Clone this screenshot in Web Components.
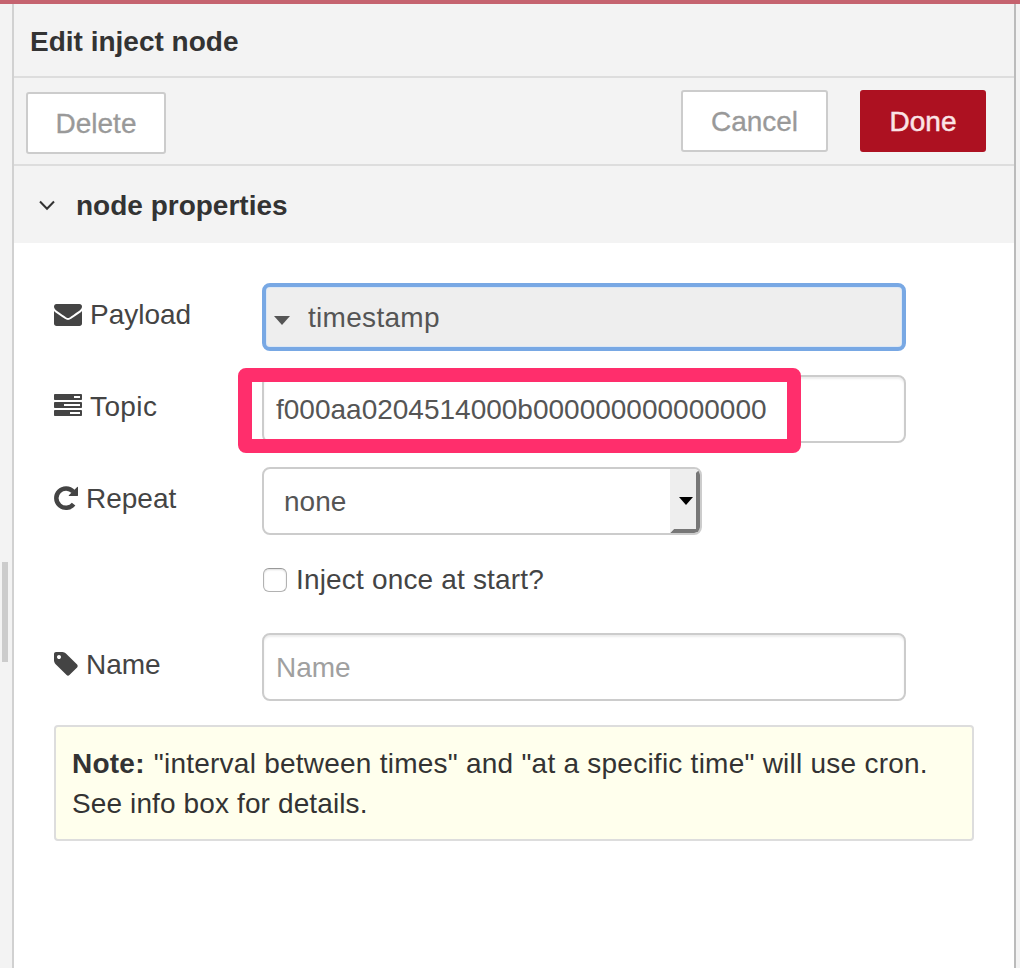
<!DOCTYPE html>
<html lang="en">
<head>
<meta charset="utf-8">
<title>Edit inject node</title>
<style>
html,body{margin:0;height:100%}
body{font:28px/40px "Liberation Sans",Arial,sans-serif;color:#333;overflow:hidden;background:#f3f3f3}
</style>
</head>
<body>
<node-editor>
  <editor-header>Edit inject node</editor-header>
  <editor-toolbar>
    <tool-button class="del">Delete</tool-button>
    <tool-button slot="end" class="cancel">Cancel</tool-button>
    <tool-button slot="end" class="done" primary>Done</tool-button>
  </editor-toolbar>
  <section-title>node properties</section-title>
  <node-form>
    <form-row icon="envelope" label="Payload"><text-field kind="typed">timestamp</text-field></form-row>
    <form-row icon="tasks" label="Topic" style="--label-spacing:.4px"><text-field marked>f000aa0204514000b000000000000000</text-field></form-row>
    <form-row icon="repeat" label="Repeat"><select-field>none</select-field></form-row>
    <check-field>Inject once at start?</check-field>
    <form-row icon="tag" label="Name"><text-field kind="placeholder">Name</text-field></form-row>
    <form-note><b slot="title">Note:</b><span slot="first">"interval between times" and "at a specific time" will use cron.</span><span>See info box for details.</span></form-note>
  </node-form>
</node-editor>
<script>
const define = (name, html, setup) => customElements.define(name, class extends HTMLElement {
  constructor() {
    super();
    this.attachShadow({ mode: 'open' }).innerHTML = '<style>*{box-sizing:border-box}:host{display:block;box-sizing:border-box}</style>' + html;
  }
  connectedCallback() { if (setup) setup(this, this.shadowRoot); }
});

// Each icon: viewBox, drawn width, markup
const icons = {
  envelope: ['0 0 1792 1792', 28, '<path d="M1792 710v794q0 66-47 113t-113 47h-1472q-66 0-113-47t-47-113v-794q44 49 101 87 362 246 497 345 57 42 92.5 65.5t94.5 48 110 24.5h2q51 0 110-24.5t94.5-48 92.5-65.5q170-123 498-345 57-39 100-87zm0-294q0 79-49 151t-122 123q-376 261-468 325-10 7-42.5 31t-54 38.5-52 32.5-57.5 27-50 9h-2q-23 0-50-9t-57.5-27-52-32.5-54-38.5-42.5-31q-91-64-262-182.5t-205-142.5q-62-42-117-115.5t-55-136.5q0-78 41.5-130t118.5-52h1472q65 0 112.5 47t47.5 113z"/>'],
  tasks: ['0 0 1792 1792', 28, '<path d="M1024 1408h640v-128h-640v128zm-384-512h1024v-128h-1024v128zm640-512h384v-128h-384v128zm512 832v256q0 26-19 45t-45 19h-1664q-26 0-45-19t-19-45v-256q0-26 19-45t45-19h1664q26 0 45 19t19 45zm0-512v256q0 26-19 45t-45 19h-1664q-26 0-45-19t-19-45v-256q0-26 19-45t45-19h1664q26 0 45 19t19 45zm0-512v256q0 26-19 45t-45 19h-1664q-26 0-45-19t-19-45v-256q0-26 19-45t45-19h1664q26 0 45 19t19 45z"/>'],
  repeat: ['0 0 24 28', 24, '<path d="M19.2 7.6A9.7 9.7 0 1 0 19.6 20.2" fill="none" stroke="#444" stroke-width="4.5"/><path d="M23.2 2.9q.8-.5.8.5v7.8q0 .9-.9.9h-7.7q-1.2 0-.5-.9z"/>'],
  tag: ['128 0 1536 1792', 24, '<path d="M576 448q0-53-37.5-90.5t-90.5-37.5-90.5 37.5-37.5 90.5 37.5 90.5 90.5 37.5 90.5-37.5 37.5-90.5zm1067 576q0 53-37 90l-491 492q-39 37-91 37-53 0-90-37l-715-716q-38-37-64.5-101t-26.5-117v-416q0-52 38-90t90-38h416q53 0 117 26.5t102 64.5l715 714q37 39 37 91z"/>']
};

define('node-editor', `<style>
:host{display:flex;flex-direction:column;height:100vh}
.top{height:4px;background:#c5636f;flex:none}
.body{flex:1;display:flex;min-height:0}
.gutter{width:12px;display:flex;padding:558px 0 0 2px}
.grip{width:6px;height:100px;background:#ccc}
main{width:1004px;border-left:2px solid #d1d1d1;border-right:2px solid #bbb;background:#fff}
</style><div class="top"></div><div class="body"><div class="gutter"><div class="grip"></div></div><main><slot></slot></main></div>`);

define('editor-header', `<style>:host{height:74px;padding:18px 16px 14px;font-weight:bold;background:#f3f3f3;border-bottom:2px solid #ddd}</style><slot></slot>`);

define('editor-toolbar', `<style>:host{display:flex;justify-content:space-between;align-items:flex-start;height:88px;padding:12px 28px 0 12px;background:#f3f3f3;border-bottom:2px solid #ddd}
.start{padding-top:2px}.end{display:flex;gap:32px}</style><div class="start"><slot></slot></div><div class="end"><slot name="end"></slot></div>`);

define('tool-button', `<style>:host{width:140px;height:62px;padding-top:10px;text-align:center;background:#fff;color:#999;border:2px solid #ccc;border-radius:3px;white-space:nowrap;-webkit-text-stroke:.3px #999}
:host(.cancel){width:147px}:host([primary]){width:126px;background:#ad1121;border-color:#ad1121;color:#fbe4e6;-webkit-text-stroke:.5px #fbe4e6}</style><slot></slot>`);

define('section-title', `<style>:host{display:flex;gap:21px;height:77px;padding:20px 0 0 25px;font-weight:bold;background:#f3f3f3}svg{margin-top:14px;flex:none}</style>
<svg width="16" height="11" viewBox="0 0 16 11" fill="none" stroke="#333" stroke-width="2"><path d="M1 1.5 8 8.8 15 1.5"/></svg><slot></slot>`);

define('node-form', `<style>:host{padding:40px 40px 0}</style><slot></slot>`);

define('form-row', `<style>:host{display:flex;height:68px;margin-bottom:24px}
.label{display:flex;gap:8px;width:208px;padding-top:12px;color:#444;letter-spacing:var(--label-spacing,0)}svg{height:28px;margin-top:5px;fill:#444}</style>
<div class="label"><svg></svg><span></span></div><slot></slot>`, (el, root) => {
  const [box, w, shape] = icons[el.getAttribute('icon')];
  const svg = root.querySelector('svg');
  svg.setAttribute('viewBox', box);
  svg.setAttribute('width', w);
  svg.innerHTML = shape;
  root.querySelector('span').textContent = el.getAttribute('label');
});

define('text-field', `<style>:host{position:relative;width:644px;height:68px;padding:13px 12px;border:2px solid #ccc;border-radius:8px;background:#fff;color:#555;box-shadow:inset 0 2px 2px rgba(0,0,0,.075)}
:host([kind=placeholder]){color:#a0a0a0}
.caret{display:none;margin:18px 18px 0 0}
:host([kind=typed]){display:flex;align-items:flex-start;padding:11px 8px;border:4px solid #78a8e4;background:#eee;box-shadow:inset 0 0 0 1px #dce8f6;letter-spacing:.3px}
:host([kind=typed]) .caret{display:block}
.mark{display:none;position:absolute;left:-26px;top:-9px;width:563px;height:85px;border:14px solid #ff2e6c;border-radius:8px}
:host([marked]) .mark{display:block}</style>
<svg class="caret" width="16" height="9" viewBox="0 0 16 9"><path d="M0 0h16L8 9z" fill="#555"/></svg><slot></slot><div class="mark"></div>`);

define('select-field', `<style>:host{display:flex;justify-content:space-between;width:440px;height:68px;border:2px solid #ccc;border-radius:8px;background:#fff;color:#555;overflow:hidden}
.value{padding:13px 20px}.drop{display:grid;place-items:center;width:30px;background:#eee;border:4px solid;border-color:#eee #777 #777 #eee;border-radius:0 5px 5px 0}
svg{margin:0 0 0 1px}</style>
<div class="value"><slot></slot></div><div class="drop"><svg width="14" height="8" viewBox="0 0 14 8"><path d="M0 0h14L7 8z"/></svg></div>`);

define('check-field', `<style>:host{display:flex;gap:9px;height:50px;margin-bottom:24px;padding:1px 0 0 209px;color:#444;letter-spacing:.17px}
.box{width:24px;height:24px;margin-top:8px;border:1.5px solid #b2b2b2;border-top-color:#999;border-radius:6px;box-shadow:inset 0 1px 2px #ddd}</style><div class="box"></div><slot></slot>`);

define('form-note', `<style>:host{height:116px;padding:17px 16px;border:2px solid #ddd;border-radius:4px;background:#ffffed;color:#333;white-space:nowrap}
.line{display:flex;gap:9px;letter-spacing:.24px}.line+.line{letter-spacing:.12px}</style>
<div class="line"><slot name="title"></slot><slot name="first"></slot></div><div class="line"><slot></slot></div>`);
</script>
</body>
</html>
